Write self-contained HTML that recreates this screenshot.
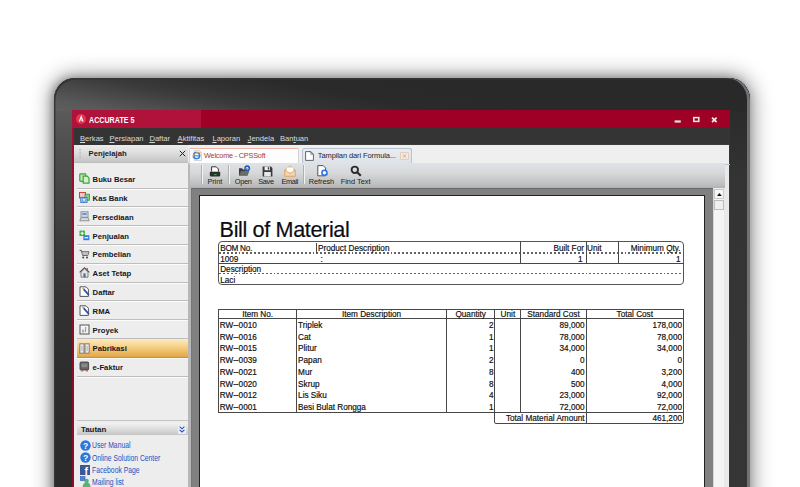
<!DOCTYPE html>
<html lang="id">
<head>
<meta charset="utf-8">
<title>ACCURATE 5 - Bill of Material</title>
<style>
*{box-sizing:border-box;margin:0;padding:0}
html,body{width:800px;height:487px;overflow:hidden;background:#fff}
body{position:relative;font-family:"Liberation Sans",sans-serif;color:#111}
.abs{position:absolute}
#shadow{left:54px;top:78px;width:696px;height:520px;border-radius:21px;box-shadow:0 0 20px 3px rgba(0,0,0,.42),-2px 0 9px 0 rgba(0,0,0,.28)}
#frame{left:54px;top:78px;width:696px;height:520px;border-radius:21px;background:#2c2c2c;overflow:hidden}
#gloss{left:0;top:0;width:696px;height:520px;background:#2b2b2b}
#gtop{left:0;top:0;width:696px;height:33px;background:linear-gradient(190.6deg,#292929 0,#2a2a2a 90px,#323232 108px,#3b3b3b 121px,#4b4b4b 136px,#595959 149px,#5e5e5e 160px)}
#gleft{left:0;top:33px;width:18.5px;height:487px;background:linear-gradient(180deg,#5a5a5a 0,#505050 30px,#464646 80px,#3c3c3c 130px,#333 185px,#2e2e2e 240px,#2b2b2b 320px,#2b2b2b 100%)}
#gright{left:676px;top:33px;width:20px;height:487px;background:linear-gradient(180deg,#2b2b2b 0,#343434 70px,#363636 100%)}
#gedge{left:0;top:0;width:696px;height:520px;border-radius:21px;box-shadow:inset 1.4px 1.4px 0 #343435}
#rim{left:0;top:0;width:696px;height:520px;border-radius:21px;box-shadow:inset -3px 0 0 #6f7378}
#screen{left:72px;top:110px;width:658px;height:380px;background:#ececec;overflow:hidden}
/* title bar */
#title{left:0;top:0;width:658px;height:18.2px;background:#9f0025}
#title .cap{left:0;top:0;width:129px;height:18.2px;background:#b1123b}
#logo{left:3.6px;top:3.8px;width:10.4px;height:10.4px;border-radius:50%;background:#e2364f}
#ttext{left:16.6px;top:4.9px;font-weight:bold;font-size:8.6px;line-height:10px;color:#fff;transform-origin:0 50%;transform:scaleX(.83);white-space:nowrap}
/* menu */
#menu{left:0;top:18.2px;width:658px;height:16.4px;background:#343434}
#menu span{position:absolute;top:5.8px;font-size:7.6px;line-height:10px;color:#dcdcdc;white-space:nowrap;transform-origin:0 50%}
#menu u{text-decoration:underline;text-underline-offset:1px}
/* sidebar */
#side{left:2.4px;top:34px;width:114px;height:346px;background:#ededed}
#shead{left:0;top:.6px;width:114px;height:17.4px;background:linear-gradient(#ececec,#dedede 45%,#c4c4c4)}
#shead b{position:absolute;left:14.2px;top:4.4px;font-size:7.7px;line-height:10px;color:#222}
.item{position:absolute;left:2.2px;width:111.4px;height:18.8px;border-bottom:1px solid #bdbdbd;box-shadow:0 1px 0 #fbfbfb}
.item b{position:absolute;left:16px;top:5.4px;font-size:7.7px;line-height:10px;color:#16161f;white-space:nowrap;letter-spacing:0}
.item svg{position:absolute;left:2.6px;top:3.6px}
.sel{background:linear-gradient(#fdebbf,#f6cf85 45%,#e3a646);border-bottom-color:#c98f3a}
#links a{position:absolute;left:17.6px;font-size:8.4px;line-height:11px;color:#1a52c4;white-space:nowrap;text-decoration:none;transform-origin:0 50%;transform:scaleX(.81)}
/* tabs */
#tabs{left:116.4px;top:34px;width:540.2px;height:19.4px;background:#efefef;border-top:.8px solid #3c3c3c}
.tab{position:absolute;top:2.6px;height:16.2px;font-size:7.5px;line-height:10px;white-space:nowrap}
/* toolbar */
#tool{left:118.4px;top:53px;width:535px;height:24.5px;background:linear-gradient(#e0e3e6,#d6d8da 40%,#bcbdbe 88%,#b0b0b0)}
.tb{position:absolute;top:14.4px;font-size:7.4px;line-height:9px;color:#1a1a1a;text-align:center;width:40px;letter-spacing:-.3px;white-space:nowrap}
.sep{position:absolute;top:2px;width:2px;height:19px;border-left:1px solid #b0b0b0;border-right:1px solid #f2f2f2}
/* preview */
#prev{left:118.6px;top:77.5px;width:522.4px;height:303px;background:#808080;border-top:1.2px solid #686868;border-left:1.4px solid #767676}
#page{left:7.4px;top:6.6px;width:506px;height:300px;background:#fff;border:1px solid #222}
#sb{left:640.8px;top:78.5px;width:10.8px;height:302px;background:#f4f4f4;border-left:1px solid #d8d8d8}
/* report */
.r{position:absolute;font-size:8.2px;line-height:10px;white-space:nowrap;color:#101010;-webkit-text-stroke:.18px #101010}
.hc{text-align:center}
.ln{position:absolute;background:#484848}
.dot{position:absolute;height:1.4px;background:repeating-linear-gradient(90deg,#626262 0,#626262 1.9px,rgba(255,255,255,0) 1.9px,rgba(255,255,255,0) 3.9px)}
</style>
</head>
<body>
<div id="shadow" class="abs"></div>
<div id="frame" class="abs"><div id="gloss" class="abs"></div><div id="gtop" class="abs"></div><div id="gleft" class="abs"></div><div id="gright" class="abs"></div><div id="gedge" class="abs"></div><div id="rim" class="abs"></div></div>
<div id="screen" class="abs">
  <div id="title" class="abs">
    <div class="cap abs"></div>
    <div id="logo" class="abs"><svg width="10.4" height="10.4" viewBox="0 0 10.4 10.4" style="position:absolute;left:0;top:0"><path d="M3.3 7.6 L5.2 2.6 L7.1 7.6" fill="none" stroke="#fff" stroke-width="1.1"/><path d="M5.2 5.2 L5.2 7.2" stroke="#fff" stroke-width=".8"/></svg></div>
    <div id="ttext" class="abs">ACCURATE 5</div>
    <svg class="abs" style="left:600px;top:4.5px" width="50" height="10" viewBox="0 0 50 10"><rect x="2.6" y="5.4" width="6.2" height="2.2" fill="#e8dfe2"/><rect x="21.8" y="2.6" width="5" height="3.8" fill="none" stroke="#f3eaec" stroke-width="1.5"/><path d="M40 2.6 L44.6 7.2 M44.6 2.6 L40 7.2" stroke="#f3eaec" stroke-width="1.7"/></svg>
  </div>
  <div id="menu" class="abs">
    <span style="left:8px"><u>B</u>erkas</span>
    <span style="left:37.4px"><u>P</u>ersiapan</span>
    <span style="left:77.4px"><u>D</u>aftar</span>
    <span style="left:105.6px"><u>A</u>ktifitas</span>
    <span style="left:140.4px"><u>L</u>aporan</span>
    <span style="left:175.6px"><u>J</u>endela</span>
    <span style="left:208px">Ban<u>t</u>uan</span>
  </div>
  <div class="abs" style="left:0;top:18px;width:2.3px;height:362px;background:linear-gradient(#a01030,#8a0f24 200px)"></div>
  <div class="abs" style="left:656.6px;top:18px;width:1.4px;height:362px;background:#8a1028"></div>
  <div class="abs" style="left:651.4px;top:34px;width:5px;height:346px;background:#e9e9e9"></div>

  <div id="side" class="abs">
    <div class="abs" style="left:0;top:0;width:114px;height:.7px;background:#343434"></div>
    <div id="shead" class="abs">
      <svg class="abs" style="left:4.6px;top:3px" width="3" height="12"><g fill="#a8a8a8"><rect x="0.5" y="1" width="1.2" height="1.2"/><rect x="0.5" y="3.6" width="1.2" height="1.2"/><rect x="0.5" y="6.2" width="1.2" height="1.2"/><rect x="0.5" y="8.8" width="1.2" height="1.2"/></g></svg>
      <b>Penjelajah</b>
      <svg class="abs" style="left:104.8px;top:5px" width="7" height="7" viewBox="0 0 7 7"><path d="M.8 .8 L6.2 6.2 M6.2 .8 L.8 6.2" stroke="#222" stroke-width="1"/></svg>
    </div>
    <div class="abs" style="left:0;top:18px;width:114px;height:1px;background:#bdbdbd"></div>

    <div class="item" style="top:25.9px"><svg width="11" height="11" viewBox="0 0 11 11"><rect x=".8" y=".8" width="6" height="7.6" rx=".8" fill="#bfe6b4" stroke="#3da63a" stroke-width="1.2"/><path d="M4.2 3.2h4l1.8 1.8v5.2h-5.8z" fill="#d6f0cf" stroke="#3da63a" stroke-width="1.2"/></svg><b>Buku Besar</b></div>
    <div class="item" style="top:44.7px"><svg width="11" height="11" viewBox="0 0 11 11"><rect x=".5" y=".5" width="6" height="5.5" fill="#f1c9c9" stroke="#c44" stroke-width="1"/><rect x="6" y="2.2" width="4.4" height="6" fill="#8fd08f" stroke="#3a9a3a" stroke-width=".9"/><rect x="1.8" y="5.4" width="6.2" height="5" fill="#bcd6f4" stroke="#3b78c8" stroke-width="1"/><rect x="3.4" y="6.8" width="3" height="2.2" fill="#fff" stroke="#3b78c8" stroke-width=".6"/></svg><b>Kas Bank</b></div>
    <div class="item" style="top:63.5px"><svg width="11" height="11" viewBox="0 0 11 11"><rect x="2" y=".8" width="7" height="5.4" fill="#dfe6f0" stroke="#8a8f98" stroke-width="1"/><rect x="3.2" y="2" width="4.6" height="2.2" fill="#6d9ad6"/><path d="M.8 9.8 L2 6.6h7l1.2 3.2z" fill="#d8d8d8" stroke="#888" stroke-width=".9"/></svg><b>Persediaan</b></div>
    <div class="item" style="top:82.3px"><svg width="11" height="11" viewBox="0 0 11 11"><rect x=".5" y=".6" width="5.4" height="5.4" fill="#3fae49"/><path d="M1.6 3.3h3.2M3.2 1.7v3.2" stroke="#fff" stroke-width="1.1"/><rect x="4.4" y="5.2" width="6" height="5" fill="#2f7fd8"/><path d="M5.6 7.7h3.6" stroke="#fff" stroke-width="1.2"/></svg><b>Penjualan</b></div>
    <div class="item" style="top:101.1px"><svg width="11" height="11" viewBox="0 0 11 11"><path d="M.6 1.4h1.8l1.2 5h5.2l1.2-3.6h-7" fill="none" stroke="#555" stroke-width="1"/><path d="M3.2 3.4h6.4l-.8 2.4h-5z" fill="#bbb"/><circle cx="4.2" cy="8.6" r="1" fill="#444"/><circle cx="8" cy="8.6" r="1" fill="#444"/></svg><b>Pembelian</b></div>
    <div class="item" style="top:119.9px"><svg width="11" height="11" viewBox="0 0 11 11"><path d="M.6 5.4 L5.5 .8 L10.4 5.4" fill="none" stroke="#555" stroke-width="1.1"/><path d="M7.6 1v2.2l1.2 1V1z" fill="#8a5a3a"/><path d="M2 5v5.2h7V5L5.5 1.8z" fill="#e9e4da" stroke="#666" stroke-width=".8"/><rect x="4.4" y="6.4" width="2.2" height="3.8" fill="#3f6fb8"/></svg><b>Aset Tetap</b></div>
    <div class="item" style="top:138.7px"><svg width="11" height="11" viewBox="0 0 11 11"><path d="M1 .8h6l2.4 2.4v7.2H1z" fill="#fff" stroke="#555" stroke-width="1"/><path d="M4.4 2.8 L9.8 9" stroke="#2b4fa8" stroke-width="1.8"/><path d="M3.6 2 L5 3.4" stroke="#c9a04a" stroke-width="1.4"/></svg><b>Daftar</b></div>
    <div class="item" style="top:157.5px"><svg width="11" height="11" viewBox="0 0 11 11"><path d="M1 .8h6l2.4 2.4v7.2H1z" fill="#fff" stroke="#555" stroke-width="1"/><path d="M4.4 2.8 L9.8 9" stroke="#2b4fa8" stroke-width="1.8"/><path d="M3.6 2 L5 3.4" stroke="#c9a04a" stroke-width="1.4"/></svg><b>RMA</b></div>
    <div class="item" style="top:176.3px"><svg width="11" height="11" viewBox="0 0 11 11"><rect x="1" y="1" width="9" height="9" fill="#f4f4f4" stroke="#555" stroke-width="1"/><path d="M3 6.2h2.2M3 7.8h2.2M6.6 3v5" stroke="#777" stroke-width=".8"/></svg><b>Proyek</b></div>
    <div class="item sel" style="top:195.1px"><svg width="11" height="11" viewBox="0 0 11 11"><rect x=".8" y=".8" width="4.2" height="9.4" fill="#e8e8e8" stroke="#777" stroke-width=".9"/><rect x="6" y=".8" width="4.2" height="9.4" fill="#e8e8e8" stroke="#777" stroke-width=".9"/><path d="M2.9 3v5M8.1 3v5" stroke="#999" stroke-width=".7"/></svg><b>Pabrikasi</b></div>
    <div class="item" style="top:213.9px"><svg width="11" height="11" viewBox="0 0 11 11"><rect x="1" y="1" width="8.6" height="8" rx="1" fill="#666" stroke="#444" stroke-width=".9"/><rect x="2.4" y="2.6" width="6" height="3.6" fill="#8a8a8a"/><circle cx="3" cy="9.8" r=".9" fill="#c55"/><circle cx="8" cy="9.8" r=".9" fill="#c55"/></svg><b>e-Faktur</b></div>

    <div class="abs" style="left:2.2px;top:276px;width:111.4px;height:1px;background:#c4c4c4"></div>
    <div class="abs" style="left:2.2px;top:279.4px;width:111.4px;height:11.2px;background:linear-gradient(#f2f2f2,#d9d9d9 60%,#c4c4c4)">
      <b style="position:absolute;left:4.4px;top:1.4px;font-size:7.9px;line-height:10px;color:#1a1a1a">Tautan</b>
      <svg class="abs" style="left:101.6px;top:1.2px" width="8" height="9" viewBox="0 0 8 9"><rect width="8" height="9" fill="#e8eef8"/><path d="M1.6 1.6 L4 3.8 L6.4 1.6 M1.6 4.8 L4 7 L6.4 4.8" fill="none" stroke="#2a57b5" stroke-width="1.1"/></svg>
    </div>
    <div id="links">
      <svg class="abs" style="left:5.2px;top:296.2px" width="11" height="11" viewBox="0 0 11 11"><circle cx="5.5" cy="5.5" r="5.2" fill="#2a78dc"/><text x="5.5" y="8.6" font-size="8.6" font-weight="bold" text-anchor="middle" fill="#fff" font-family="Liberation Sans, sans-serif">?</text></svg>
      <a style="top:296.4px">User Manual</a>
      <svg class="abs" style="left:5.2px;top:308.4px" width="11" height="11" viewBox="0 0 11 11"><circle cx="5.5" cy="5.5" r="5.2" fill="#2a78dc"/><text x="5.5" y="8.6" font-size="8.6" font-weight="bold" text-anchor="middle" fill="#fff" font-family="Liberation Sans, sans-serif">?</text></svg>
      <a style="top:308.6px">Online Solution Center</a>
      <svg class="abs" style="left:5.6px;top:320.8px" width="10" height="10" viewBox="0 0 10 10"><rect width="10" height="10" fill="#3b5998"/><text x="6.2" y="9.6" font-size="10.5" font-weight="bold" text-anchor="middle" fill="#fff" font-family="Liberation Sans, sans-serif">f</text></svg>
      <a style="top:320.8px">Facebook Page</a>
      <svg class="abs" style="left:5.2px;top:332px" width="11" height="12" viewBox="0 0 11 12"><rect x=".4" y=".6" width="4.6" height="4" fill="#4a86d8" stroke="#2d5fb0" stroke-width=".6"/><circle cx="6.6" cy="5" r="2.2" fill="#57b27a"/><path d="M2.6 12c0-4 1.6-5.4 4-5.4s4 1.4 4 5.4z" fill="#57b27a"/></svg>
      <a style="top:333px">Mailing list</a>
    </div>
  </div>
  <div class="abs" style="left:116.3px;top:53px;width:2.3px;height:327px;background:#b7b7b7"></div>

  <div id="tabs" class="abs">
    <div class="tab" style="left:.8px;width:109.4px;background:#fdfdfd;border:1px solid #d4d4d4;border-top:1px solid #efb3a6;border-bottom:none;border-radius:2px 2px 0 0">
      <svg class="abs" style="left:1.6px;top:1.8px" width="10" height="11" viewBox="0 0 10 11"><path d="M2.4 .6h5l2 2v7.8h-7z" fill="#fff" stroke="#b8b8b8" stroke-width=".7"/><circle cx="4.6" cy="5.6" r="3.1" fill="none" stroke="#2f7fe0" stroke-width="1.5"/><path d="M2 5.8h5.4" stroke="#2f7fe0" stroke-width="1.1"/><path d="M.6 7.4 C2 3.2 6 1.4 8.8 2.6" fill="none" stroke="#f0b040" stroke-width=".9"/></svg>
      <span style="position:absolute;left:13.8px;top:2.6px;color:#a63a3a;font-size:7.3px;letter-spacing:-.2px">Welcome - CPSSoft</span>
    </div>
    <div class="tab" style="left:113.4px;width:110.4px;background:linear-gradient(#e9edf2,#dde2e8);border:1px solid #b9c3cf;border-bottom:none;border-radius:2.5px 2.5px 0 0">
      <svg class="abs" style="left:2.2px;top:2.6px" width="9" height="10" viewBox="0 0 9 10"><path d="M.6 .6h5.2l2.6 2.6v6.2H.6z" fill="#fff" stroke="#555" stroke-width=".9"/><path d="M5.8 .6v2.6h2.6" fill="none" stroke="#555" stroke-width=".7"/></svg>
      <span style="position:absolute;left:15px;top:2.6px;color:#1f1f2a;letter-spacing:-.1px">Tampilan dari Formula...</span>
      <svg class="abs" style="left:97px;top:3.8px" width="9" height="8" viewBox="0 0 9 8"><rect x=".4" y=".4" width="8.2" height="7.2" rx="1" fill="#f3ebe4" stroke="#e0c0ac" stroke-width=".8"/><path d="M2.6 2.2 L6.4 5.8 M6.4 2.2 L2.6 5.8" stroke="#d6ae96" stroke-width="1"/></svg>
    </div>
    <div class="abs" style="left:0;top:19.2px;width:113.6px;height:.8px;background:#b9c3cf"></div>
    <div class="abs" style="left:223.6px;top:19.2px;width:320px;height:.8px;background:#b9c3cf"></div>
  </div>

  <div id="tool" class="abs">
    <div class="sep" style="left:10.2px"></div>
    <div class="sep" style="left:37.2px"></div>
    <div class="sep" style="left:112.4px"></div>
    <!-- Print -->
    <svg class="abs" style="left:18.9px;top:2.6px" width="12" height="12" viewBox="0 0 12 12"><path d="M2.6 5.6V.8h4.6l2.2 2.2v2.6" fill="#fff" stroke="#333" stroke-width="1"/><rect x=".8" y="5.8" width="10.4" height="4.6" rx=".8" fill="#2d2d2d"/><rect x="5" y="8.2" width="2.6" height=".9" fill="#46c046"/></svg>
    <div class="tb" style="left:4.4px;letter-spacing:-.1px">Print</div>
    <!-- Open -->
    <svg class="abs" style="left:47.4px;top:2.2px" width="13" height="12" viewBox="0 0 13 12"><path d="M1 10.6V3.2h3l1 1.2h4.6v6.2z" fill="#3a3a3a"/><path d="M1 10.6 L3 6h8.4L9.6 10.6z" fill="#6a6a6a"/><circle cx="9.2" cy="3.2" r="2.9" fill="#2659b8"/><path d="M7.8 3.6 L9.2 2 L10.6 3.6 M9.2 2.2v2.6" stroke="#fff" stroke-width=".8" fill="none"/></svg>
    <div class="tb" style="left:32.8px">Open</div>
    <!-- Save -->
    <svg class="abs" style="left:71.6px;top:3px" width="11" height="11" viewBox="0 0 11 11"><path d="M.6 .6h8.4l1.4 1.4v8.4H.6z" fill="#3a3a3a"/><rect x="2.6" y=".6" width="5.4" height="3.6" fill="#f2f2f2"/><rect x="5.8" y="1.2" width="1.4" height="2.4" fill="#3a3a3a"/><rect x="2.2" y="6" width="6.6" height="4.4" fill="#e8e8e8"/></svg>
    <div class="tb" style="left:55.6px">Save</div>
    <!-- Email -->
    <svg class="abs" style="left:93.3px;top:2.4px" width="12" height="12" viewBox="0 0 12 12"><path d="M.8 5 L6 .8 L11.2 5v6.2H.8z" fill="#f8e6cf" stroke="#e0a468" stroke-width=".9"/><rect x="2.6" y="2.2" width="6.8" height="5.4" fill="#fff" stroke="#e4c09a" stroke-width=".5"/><path d="M.8 5.2 L6 8.6 L11.2 5.2V11.2H.8z" fill="#f5d6b0" stroke="#e0a468" stroke-width=".8"/></svg>
    <div class="tb" style="left:79.4px;letter-spacing:-.4px">Email</div>
    <!-- Refresh -->
    <svg class="abs" style="left:126.6px;top:2.4px" width="12" height="12" viewBox="0 0 12 12"><path d="M.8 .6h5.4l2.4 2.4v7.8H.8z" fill="#fff" stroke="#444" stroke-width=".9"/><circle cx="7.4" cy="7.8" r="2.5" fill="#fff" stroke="#2a6fe0" stroke-width="1.5"/><path d="M8.6 9.6l2 .8-.4-2.2z" fill="#2a6fe0"/></svg>
    <div class="tb" style="left:111px;letter-spacing:-.06px">Refresh</div>
    <!-- Find -->
    <svg class="abs" style="left:159.8px;top:2.4px" width="12" height="12" viewBox="0 0 12 12"><circle cx="4.8" cy="4.8" r="3.2" fill="none" stroke="#2a2a2a" stroke-width="1.9"/><path d="M7.2 7.2 L10.8 10.8" stroke="#2a2a2a" stroke-width="2.2"/></svg>
    <div class="tb" style="left:145.2px;letter-spacing:0">Find Text</div>
  </div>
  
  <div id="prev" class="abs">
    <div id="page" class="abs"></div>
  </div>
  <div id="sb" class="abs">
    <div class="abs" style="left:0;top:0;width:10.6px;height:10.4px;background:#f6f6f6;border:1px solid #c9c9c9"><svg width="9" height="9" viewBox="0 0 9 9" style="position:absolute;left:0;top:0"><path d="M2 6 L4.4 3 L6.8 6z" fill="#111"/></svg></div>
    <div class="abs" style="left:0;top:11.4px;width:10.6px;height:10.4px;background:#efefef;border:1px solid #bdbdbd"></div>
  </div>

  <!-- report content; coordinates relative to screen (72,110) -->
  <div id="rep" class="abs" style="left:0;top:0;width:658px;height:380px">
    <div class="r" style="left:147.6px;top:108.4px;font-size:21.6px;line-height:24px;letter-spacing:-.36px;color:#0c0c14">Bill of Material</div>
    <!-- box 1 -->
    <div class="abs" style="left:146.4px;top:131.4px;width:466px;height:44px;border:1.2px solid #555;border-radius:4px"></div>
    <div class="ln" style="left:146.4px;top:152.8px;width:466px;height:1px"></div>
    <div class="dot" style="left:147.4px;top:142.2px;width:464px"></div>
    <div class="dot" style="left:147.4px;top:163.1px;width:464px"></div>
    <div class="ln" style="left:243.8px;top:133px;width:1px;height:10px"></div>
    <div class="ln" style="left:448.4px;top:131.4px;width:1px;height:22px"></div>
    <div class="ln" style="left:513.6px;top:131.4px;width:1px;height:22px"></div>
    <div class="ln" style="left:546px;top:131.4px;width:1px;height:22px"></div>
    <div class="r" style="left:148.2px;top:134.3px;letter-spacing:-.25px">BOM No.</div>
    <div class="r" style="left:246px;top:134.3px">Product Description</div>
    <div class="r" style="left:148.2px;top:144.7px">1009</div>
    <div class="r" style="left:248.6px;top:144.7px">:</div>
    <div class="r" style="left:148.2px;top:155.1px">Description</div>
    <div class="r" style="left:148.2px;top:165.5px">Laci</div>
    <div class="r" style="right:146.1px;top:134.3px">Built For</div>
    <div class="r" style="left:515px;top:134.3px">Unit</div>
    <div class="r" style="right:49.4px;top:134.3px">Minimum Qty.</div>
    <div class="r" style="right:147.4px;top:144.7px">1</div>
    <div class="r" style="right:49.4px;top:144.7px">1</div>
    <!-- table 2 -->
    <div class="abs" style="left:146.2px;top:198.6px;width:465.8px;height:104.3px;border:1px solid #484848"></div>
    <div class="ln" style="left:146.2px;top:208.2px;width:465.8px;height:1px"></div>
    <div class="ln" style="left:224.1px;top:198.6px;width:1px;height:104.3px"></div>
    <div class="ln" style="left:374.0px;top:198.6px;width:1px;height:104.3px"></div>
    <div class="ln" style="left:422.4px;top:198.6px;width:1px;height:104.3px"></div>
    <div class="ln" style="left:448.4px;top:198.6px;width:1px;height:104.3px"></div>
    <div class="ln" style="left:513.6px;top:198.6px;width:1px;height:104.3px"></div>
    <div class="abs" style="left:422.4px;top:301.9px;width:189.6px;height:11.7px;border:1px solid #484848;border-radius:0 0 2px 2px"></div>
    <div class="ln" style="left:513.6px;top:301.9px;width:1px;height:11.7px"></div>
    <div class="r hc" style="left:146.2px;width:78.90px;top:200.1px">Item No.</div>
    <div class="r hc" style="left:224.1px;width:150.90px;top:200.1px">Item Description</div>
    <div class="r hc" style="left:374.0px;width:49.40px;top:200.1px">Quantity</div>
    <div class="r hc" style="left:422.4px;width:27.00px;top:200.1px">Unit</div>
    <div class="r hc" style="left:448.4px;width:66.20px;top:200.1px">Standard Cost</div>
    <div class="r hc" style="left:513.6px;width:98.40px;top:200.1px">Total Cost</div>
    <div class="r" style="left:147.8px;top:211.00px">RW--0010</div>
    <div class="r" style="left:226.1px;top:211.00px">Triplek</div>
    <div class="r" style="right:236.4px;top:211.00px">2</div>
    <div class="r" style="right:145.4px;top:211.00px">89,000</div>
    <div class="r" style="right:48.0px;top:211.00px">178,000</div>
    <div class="r" style="left:147.8px;top:222.71px">RW--0016</div>
    <div class="r" style="left:226.1px;top:222.71px">Cat</div>
    <div class="r" style="right:236.4px;top:222.71px">1</div>
    <div class="r" style="right:145.4px;top:222.71px">78,000</div>
    <div class="r" style="right:48.0px;top:222.71px">78,000</div>
    <div class="r" style="left:147.8px;top:234.42px">RW--0015</div>
    <div class="r" style="left:226.1px;top:234.42px">Plitur</div>
    <div class="r" style="right:236.4px;top:234.42px">1</div>
    <div class="r" style="right:145.4px;top:234.42px">34,000</div>
    <div class="r" style="right:48.0px;top:234.42px">34,000</div>
    <div class="r" style="left:147.8px;top:246.13px">RW--0039</div>
    <div class="r" style="left:226.1px;top:246.13px">Papan</div>
    <div class="r" style="right:236.4px;top:246.13px">2</div>
    <div class="r" style="right:145.4px;top:246.13px">0</div>
    <div class="r" style="right:48.0px;top:246.13px">0</div>
    <div class="r" style="left:147.8px;top:257.84px">RW--0021</div>
    <div class="r" style="left:226.1px;top:257.84px">Mur</div>
    <div class="r" style="right:236.4px;top:257.84px">8</div>
    <div class="r" style="right:145.4px;top:257.84px">400</div>
    <div class="r" style="right:48.0px;top:257.84px">3,200</div>
    <div class="r" style="left:147.8px;top:269.55px">RW--0020</div>
    <div class="r" style="left:226.1px;top:269.55px">Skrup</div>
    <div class="r" style="right:236.4px;top:269.55px">8</div>
    <div class="r" style="right:145.4px;top:269.55px">500</div>
    <div class="r" style="right:48.0px;top:269.55px">4,000</div>
    <div class="r" style="left:147.8px;top:281.26px">RW--0012</div>
    <div class="r" style="left:226.1px;top:281.26px">Lis Siku</div>
    <div class="r" style="right:236.4px;top:281.26px">4</div>
    <div class="r" style="right:145.4px;top:281.26px">23,000</div>
    <div class="r" style="right:48.0px;top:281.26px">92,000</div>
    <div class="r" style="left:147.8px;top:292.97px">RW--0001</div>
    <div class="r" style="left:226.1px;top:292.97px">Besi Bulat Rongga</div>
    <div class="r" style="right:236.4px;top:292.97px">1</div>
    <div class="r" style="right:145.4px;top:292.97px">72,000</div>
    <div class="r" style="right:48.0px;top:292.97px">72,000</div>
    <div class="r" style="right:145.4px;top:303.5px">Total Material Amount</div>
    <div class="r" style="right:48.0px;top:303.5px">461,200</div>
  </div>
</div>
</body>
</html>
